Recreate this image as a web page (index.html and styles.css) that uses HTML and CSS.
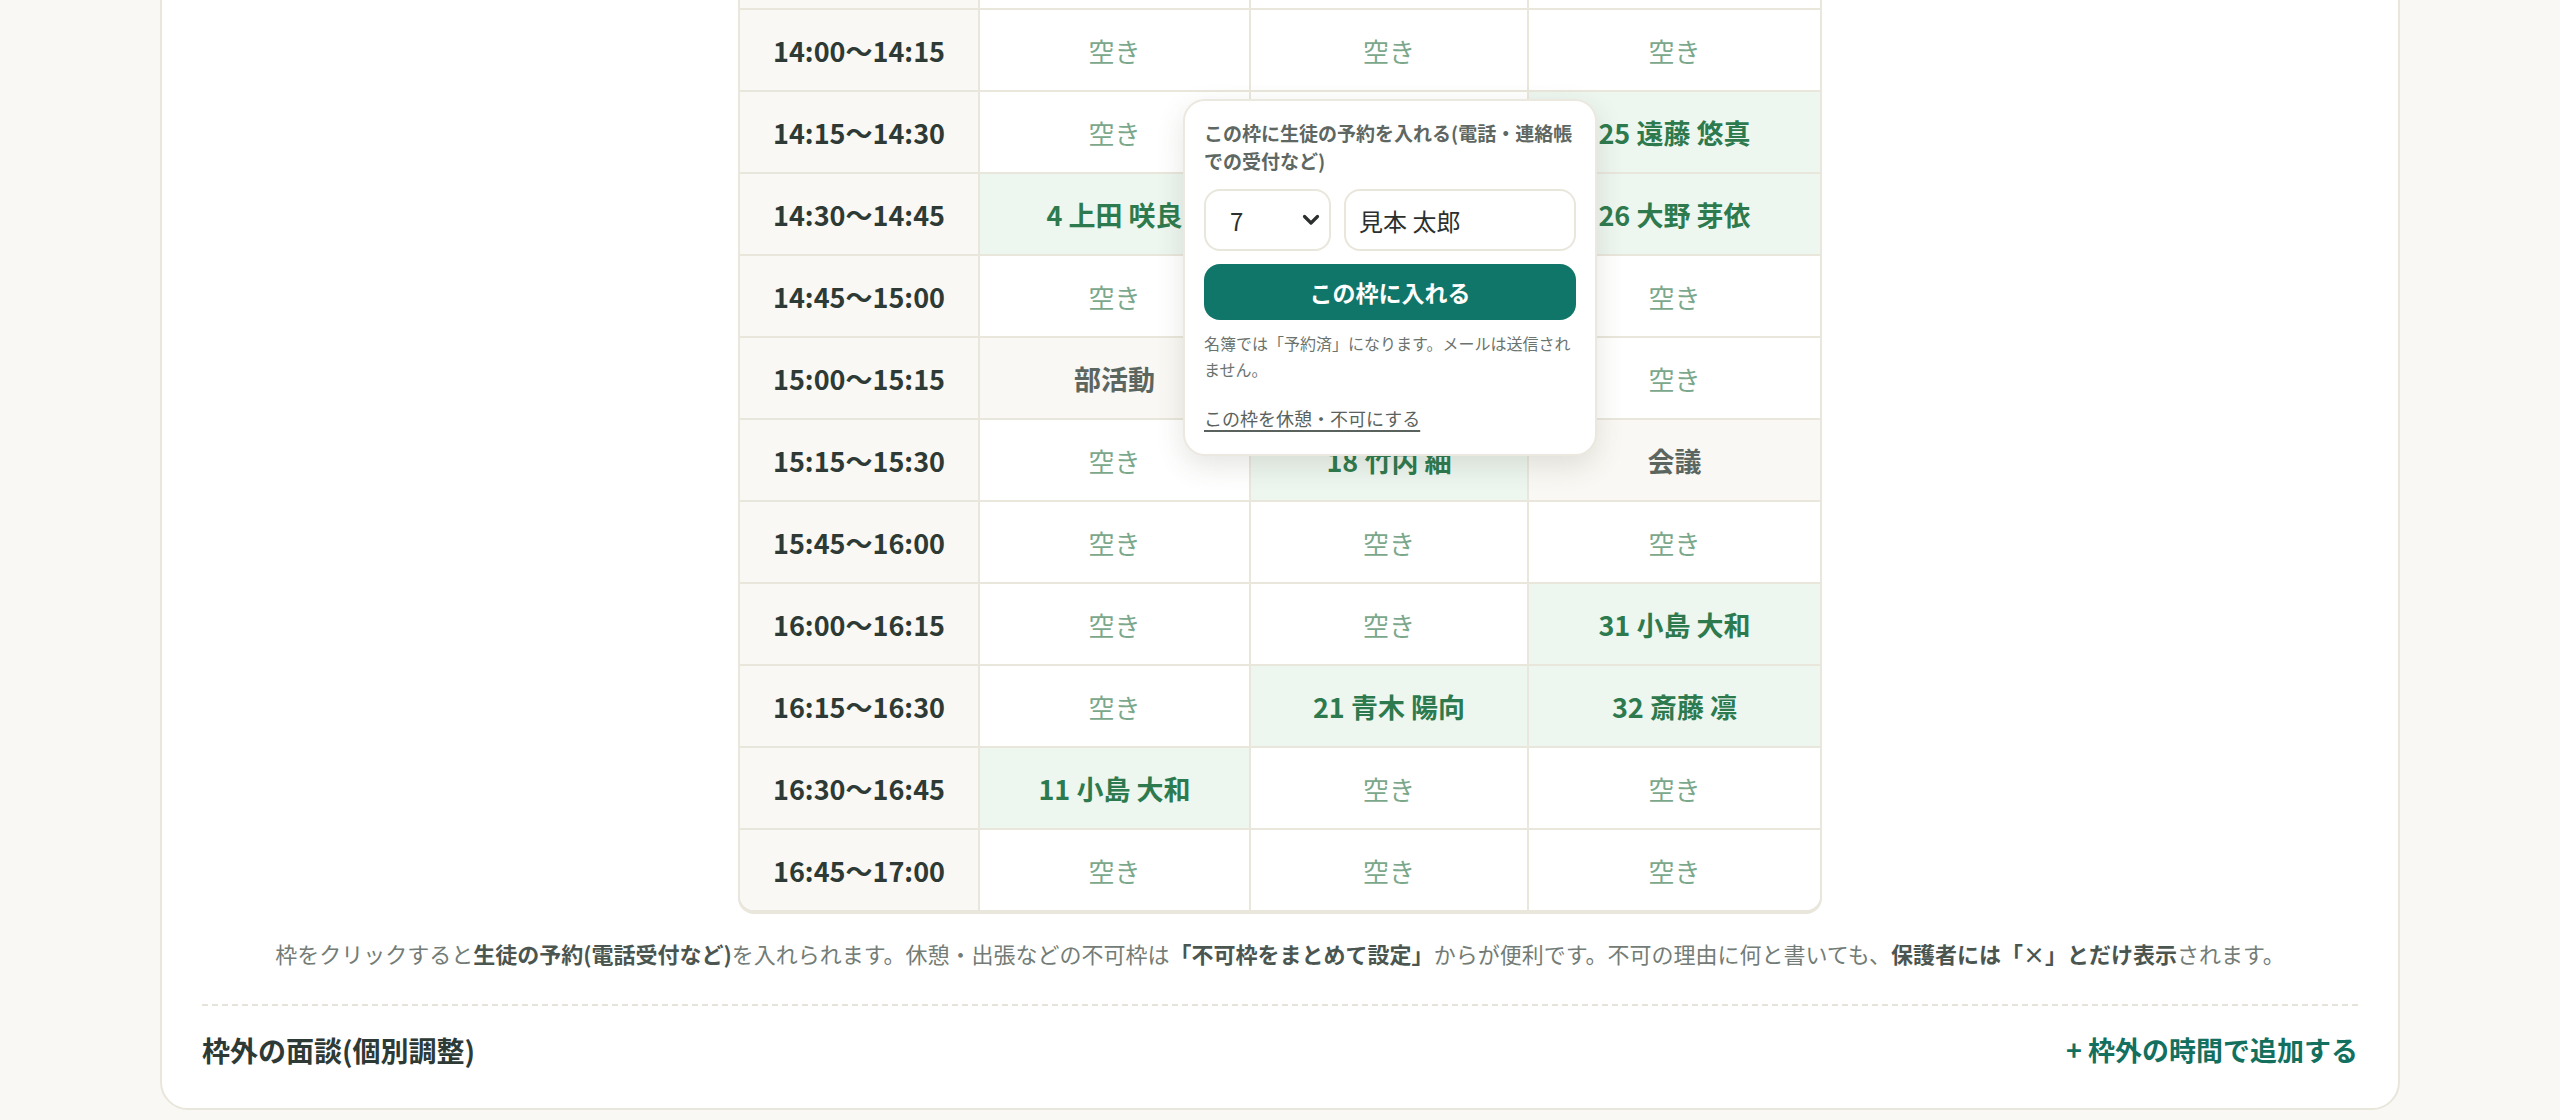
FILE: index.html
```html
<!DOCTYPE html>
<html lang="ja">
<head>
<meta charset="utf-8">
<title>面談スケジュール</title>
<link rel="stylesheet" href="styles.css">
</head>
<body>
<div class="page">
  <section class="card">
    <div class="schedule">
      <div class="table-wrap">
        <table class="grid">
          <colgroup>
            <col class="c-time"><col class="c-a"><col class="c-b"><col class="c-c">
          </colgroup>
          <tbody>
            <tr class="prev"><td class="time"></td><td class="free"></td><td class="free"></td><td class="free"></td></tr>
            <tr><td class="time">14:00〜14:15</td><td class="free">空き</td><td class="free">空き</td><td class="free">空き</td></tr>
            <tr><td class="time">14:15〜14:30</td><td class="free">空き</td><td class="free selected"></td><td class="booked">25 遠藤 悠真</td></tr>
            <tr><td class="time">14:30〜14:45</td><td class="booked">4 上田 咲良</td><td class="free"></td><td class="booked">26 大野 芽依</td></tr>
            <tr><td class="time">14:45〜15:00</td><td class="free">空き</td><td class="free"></td><td class="free">空き</td></tr>
            <tr><td class="time">15:00〜15:15</td><td class="blocked">部活動</td><td class="free"></td><td class="free">空き</td></tr>
            <tr><td class="time">15:15〜15:30</td><td class="free">空き</td><td class="booked">18 竹内 紬</td><td class="blocked">会議</td></tr>
            <tr><td class="time">15:45〜16:00</td><td class="free">空き</td><td class="free">空き</td><td class="free">空き</td></tr>
            <tr><td class="time">16:00〜16:15</td><td class="free">空き</td><td class="free">空き</td><td class="booked">31 小島 大和</td></tr>
            <tr><td class="time">16:15〜16:30</td><td class="free">空き</td><td class="booked">21 青木 陽向</td><td class="booked">32 斎藤 凛</td></tr>
            <tr><td class="time">16:30〜16:45</td><td class="booked">11 小島 大和</td><td class="free">空き</td><td class="free">空き</td></tr>
            <tr><td class="time">16:45〜17:00</td><td class="free">空き</td><td class="free">空き</td><td class="free">空き</td></tr>
          </tbody>
        </table>
      </div>

      <div class="popover">
        <p class="pop-title">この枠に生徒の予約を入れる(電話・連絡帳での受付など)</p>
        <div class="fields">
          <div class="select-box">
            <select class="num-select">
              <option>7</option>
            </select>
            <svg class="chev" width="18" height="12" viewBox="0 0 18 12" aria-hidden="true">
              <path d="M2.5 2.5 L9 9 L15.5 2.5" fill="none" stroke="#2b2f2d" stroke-width="3.2" stroke-linecap="round" stroke-linejoin="round"/>
            </svg>
          </div>
          <input class="name-input" type="text" value="見本 太郎">
        </div>
        <button class="submit" type="button">この枠に入れる</button>
        <p class="pop-note">名簿では「予約済」になります。メールは送信されません。</p>
        <a class="pop-link" href="#">この枠を休憩・不可にする</a>
      </div>
    </div>

    <p class="note">枠をクリックすると<b>生徒の予約(電話受付など)</b>を入れられます。休憩・出張などの不可枠は<b>「不可枠をまとめて設定」</b>からが便利です。不可の理由に何と書いても、<b>保護者には「×」とだけ表示</b>されます。</p>

    <div class="extra">
      <h2 class="extra-title">枠外の面談(個別調整)</h2>
      <a class="extra-add" href="#">+ 枠外の時間で追加する</a>
    </div>
  </section>
</div>
</body>
</html>
```

FILE: styles.css
```css
* { box-sizing: border-box; }

html, body {
  margin: 0;
  padding: 0;
  background: #f9f8f4;
  font-family: "Noto Sans CJK JP", "Noto Sans", sans-serif;
  color: #2e3a35;
  overflow: hidden;
}

.page {
  padding: 0 160px;
}

.card {
  margin-top: -116px;
  background: #ffffff;
  border: 2px solid #e9e6dc;
  border-radius: 28px;
  padding: 40px 40px 0;
}

.schedule {
  position: relative;
  width: 1084px;
  margin: 0 auto;
}

.table-wrap {
  border: 2px solid #e9e6dc;
  border-radius: 16px;
  overflow: hidden;
  box-shadow: 0 2px 0 #e9e6dc;
  background: #ffffff;
}

.grid {
  width: 1080px;
  table-layout: fixed;
  border-collapse: separate;
  border-spacing: 0;
}

.c-time { width: 240px; }
.c-a { width: 271px; }
.c-b { width: 278px; }
.c-c { width: 291px; }

.grid td {
  height: 82px;
  padding: 0;
  text-align: center;
  vertical-align: middle;
  border-right: 2px solid #e9e6dc;
  border-bottom: 2px solid #e9e6dc;
  white-space: nowrap;
}

.grid td:last-child { border-right: 0; }
.grid tr:last-child td { border-bottom: 0; height: 80px; }

.time {
  background: #f9f8f4;
  font-size: 27px;
  font-weight: 700;
  color: #2e3a35;
}

.free {
  background: #ffffff;
  font-size: 26px;
  font-weight: 400;
  color: #7ba78b;
}

.booked {
  background: #edf6ef;
  font-size: 27px;
  font-weight: 700;
  color: #2d7a4e;
}

.blocked {
  background: #f9f8f4;
  font-size: 27px;
  font-weight: 700;
  color: #5c6660;
}

/* popover */
.popover {
  position: absolute;
  left: 445px;
  top: 173px;
  width: 414px;
  background: #ffffff;
  border: 2px solid #ebe8df;
  border-radius: 22px;
  padding: 18px 19px 23px;
  box-shadow: 0 10px 28px rgba(70, 70, 50, 0.14);
}

.pop-title {
  margin: 0;
  font-size: 19px;
  line-height: 28px;
  font-weight: 700;
  color: #5e6762;
}

.fields {
  display: grid;
  grid-template-columns: 127px 1fr;
  gap: 13px;
  margin-top: 14px;
}

.select-box {
  position: relative;
  height: 62px;
  border: 2px solid #e9e6dc;
  border-radius: 16px;
  background: #ffffff;
}

.num-select {
  appearance: none;
  -webkit-appearance: none;
  width: 100%;
  height: 100%;
  border: 0;
  background: transparent;
  font-family: "Noto Sans CJK JP", "Noto Sans", sans-serif;
  font-size: 24px;
  color: #2b2f2d;
  padding: 0 0 0 24px;
  outline: none;
}

.chev {
  position: absolute;
  right: 9px;
  top: 23px;
  pointer-events: none;
}

.name-input {
  height: 62px;
  width: 100%;
  border: 2px solid #e9e6dc;
  border-radius: 16px;
  padding: 0 13px;
  font-family: "Noto Sans CJK JP", "Noto Sans", sans-serif;
  font-size: 24px;
  color: #2b2f2d;
  background: #ffffff;
  outline: none;
}

.submit {
  display: block;
  width: 100%;
  height: 56px;
  margin-top: 13px;
  border: 0;
  border-radius: 16px;
  background: #11766a;
  color: #ffffff;
  font-family: "Noto Sans CJK JP", "Noto Sans", sans-serif;
  font-size: 23px;
  font-weight: 700;
}

.pop-note {
  margin: 10px 0 0;
  font-size: 16px;
  line-height: 26px;
  color: #6b736e;
}

.pop-link {
  display: inline-block;
  margin-top: 23px;
  font-size: 18px;
  line-height: 26px;
  color: #5a625d;
  text-decoration: underline;
  text-decoration-thickness: 2px;
  text-underline-offset: 4px;
}

/* note under table */
.note {
  margin: 23px 0 0;
  text-align: center;
  font-size: 22px;
  line-height: 36px;
  color: #737c76;
}

.note b {
  font-weight: 700;
  color: #4b5651;
}

/* extra section */
.extra {
  margin-top: 33px;
  border-top: 2px dashed #e6e3da;
  padding: 24px 0 38px;
  display: flex;
  justify-content: space-between;
  align-items: center;
}

.extra-title {
  margin: 0;
  font-size: 28px;
  line-height: 40px;
  font-weight: 700;
  color: #2e3a35;
}

.extra-add {
  font-size: 27px;
  line-height: 40px;
  font-weight: 700;
  color: #13705f;
  text-decoration: none;
}
```
